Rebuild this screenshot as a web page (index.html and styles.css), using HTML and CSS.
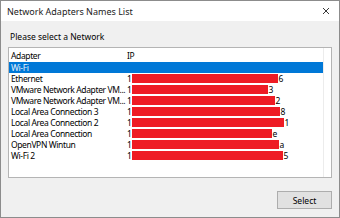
FILE: index.html
```html
<!DOCTYPE html>
<html>
<head>
<meta charset="utf-8">
<link rel="stylesheet" href="styles.css">
</head>
<body>
<div class="window">
  <div class="titlebar">
    <span class="title">Network Adapters Names List</span>
    <svg class="close" width="8" height="8" viewBox="0 0 8 8"><path d="M1 1L7 7M7 1L1 7" stroke="#222" stroke-width="0.9"/></svg>
  </div>
  <div class="content">
    <div class="prompt">Please select a Network</div>
    <div class="list">
      <div class="inner">
        <div class="header">
          <div class="col1">Adapter</div>
          <div class="col2">IP</div>
        </div>
        <div class="row selected"><div class="col1">Wi-Fi</div><div class="col2"></div></div>
        <div class="row"><div class="col1">Ethernet</div><div class="col2">1<span class="red" style="width:146px"></span>6</div></div>
        <div class="row"><div class="col1">VMware Network Adapter VM...</div><div class="col2">1<span class="red" style="width:136px"></span>3</div></div>
        <div class="row"><div class="col1">VMware Network Adapter VM...</div><div class="col2">1<span class="red" style="width:143px"></span>2</div></div>
        <div class="row"><div class="col1">Local Area Connection 3</div><div class="col2">1<span class="red" style="width:148px"></span>8</div></div>
        <div class="row"><div class="col1">Local Area Connection 2</div><div class="col2">1<span class="red" style="width:152px"></span>1</div></div>
        <div class="row"><div class="col1">Local Area Connection</div><div class="col2">1<span class="red short" style="width:140px"></span>e</div></div>
        <div class="row"><div class="col1">OpenVPN Wintun</div><div class="col2">1<span class="red" style="width:147px"></span>a</div></div>
        <div class="row"><div class="col1">Wi-Fi 2</div><div class="col2">1<span class="red" style="width:151px"></span>5</div></div>
      </div>
    </div>
    <div class="footer">
      <button class="btn">Select</button>
    </div>
  </div>
</div>
</body>
</html>
```

FILE: styles.css
```css
html, body {
  margin: 0;
  padding: 0;
}
body {
  font-family: "Noto Sans", "Open Sans", sans-serif;
  font-size: 9px;
  color: #000;
}
.window {
  width: 340px;
  height: 218px;
  box-sizing: border-box;
  border: 1px solid #8c8c8c;
  background: #f0f0f0;
  display: flex;
  flex-direction: column;
}
.titlebar {
  height: 20px;
  background: #fff;
  display: flex;
  align-items: center;
  justify-content: space-between;
  padding: 0 9px 0 6px;
  flex: none;
}
.title {
  font-size: 9px;
  color: #222;
}
.close {
  display: block;
}
.content {
  flex: 1;
  display: flex;
  flex-direction: column;
  padding: 9px 7px 0 7px;
}
.prompt {
  padding-left: 2px;
  height: 17px;
  line-height: 14px;
  font-size: 8.5px;
}
.list {
  height: 131px;
  box-sizing: border-box;
  border: 1px solid #b4b4b4;
  background: #fff;
  padding-right: 7px;
  font-size: 8.5px;
  letter-spacing: -0.38px;
}
.inner {
  border-right: 1px solid #ececec;
  height: 100%;
}
.header, .row {
  display: flex;
  align-items: center;
}
.header {
  height: 14px;
}
.row {
  height: 11px;
}
.col1 {
  width: 116px;
  padding-left: 2px;
  white-space: nowrap;
  overflow: hidden;
}
.col2 {
  flex: 1;
  white-space: nowrap;
  display: flex;
  align-items: center;
}
.selected {
  background: #0078d7;
  color: #e6f0fa;
}
.red {
  display: inline-block;
  height: 9px;
  background: #ee1c25;
  margin-left: 1px;
}
.footer {
  flex: 1;
  display: flex;
  justify-content: flex-end;
  align-items: flex-start;
  padding-top: 13px;
}
.btn {
  width: 55px;
  height: 18px;
  box-sizing: border-box;
  border: 1px solid #adadad;
  background: #e1e1e1;
  font-family: "Noto Sans", "Open Sans", sans-serif;
  font-size: 8.5px;
  color: #000;
  padding: 0;
}
```
